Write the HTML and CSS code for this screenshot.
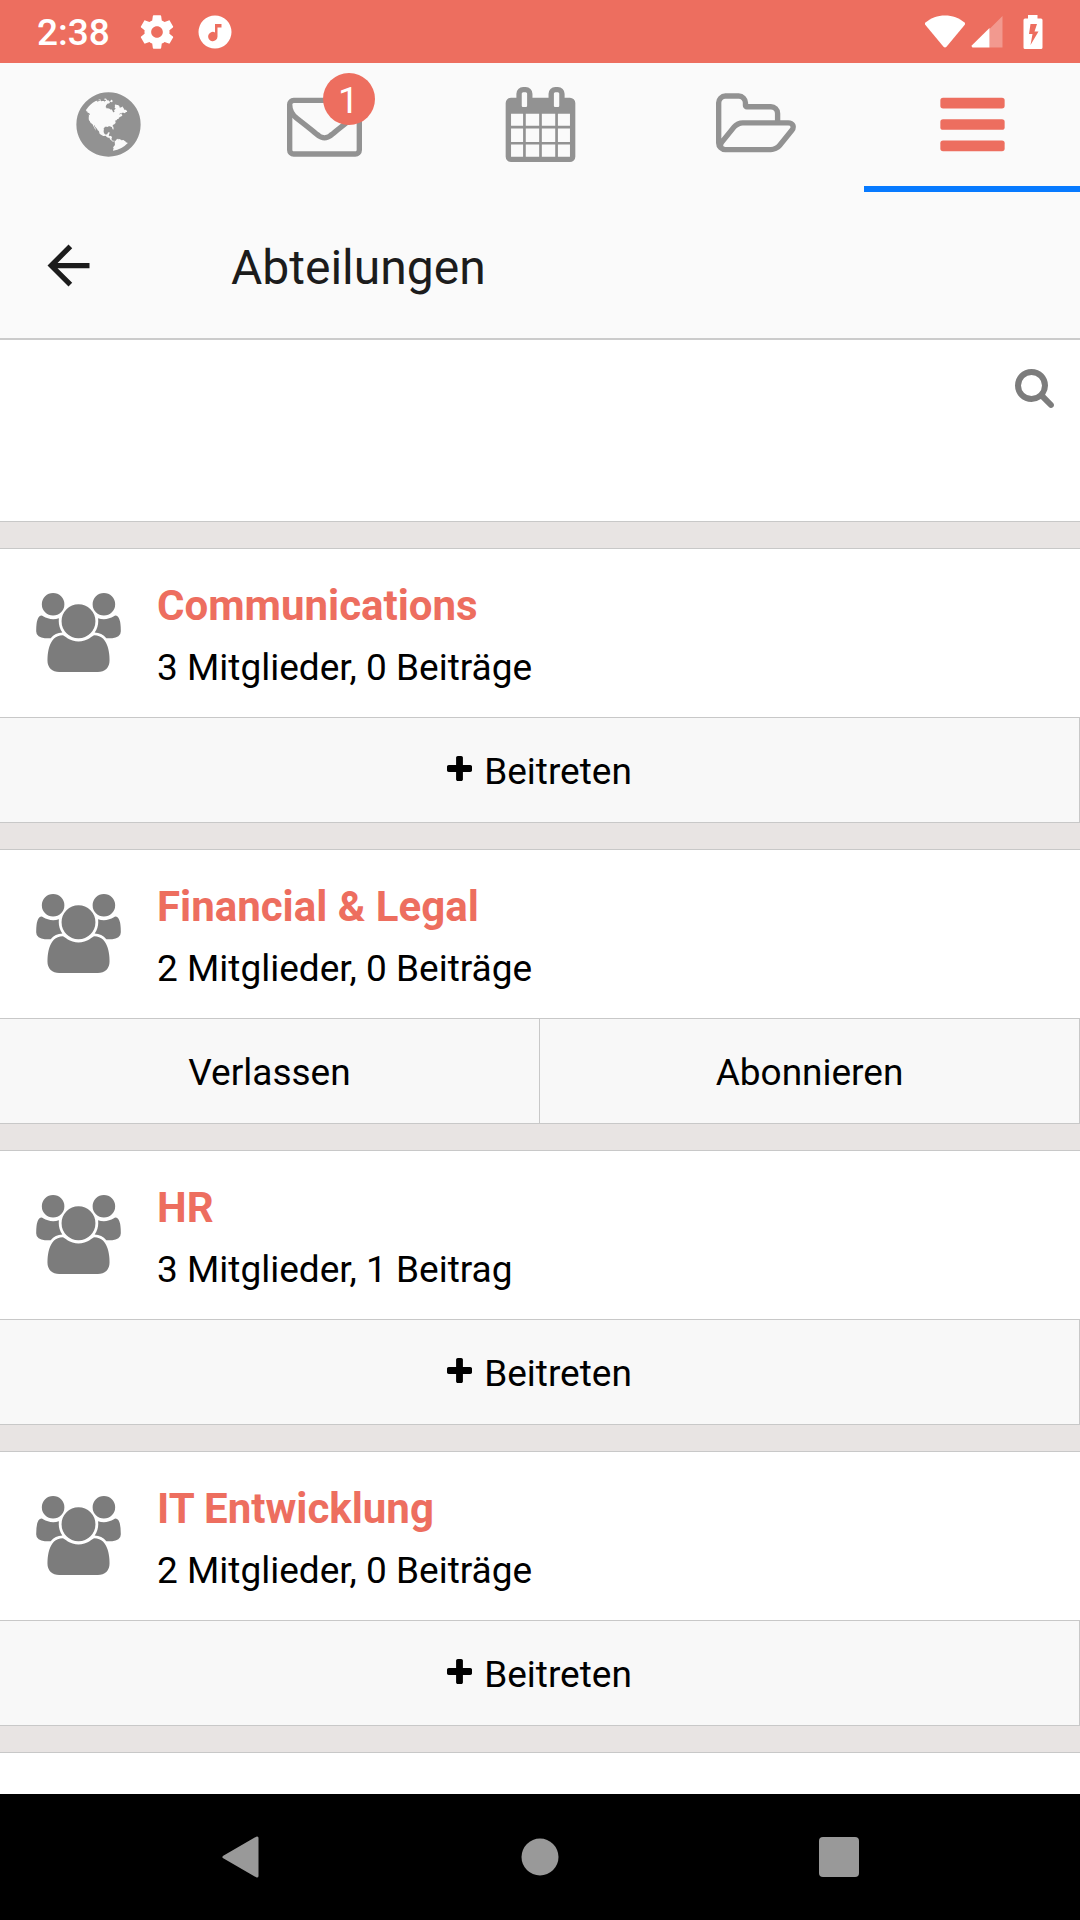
FILE: index.html
```html
<!DOCTYPE html>
<html lang="de">
<head>
<meta charset="utf-8">
<meta name="viewport" content="width=device-width, initial-scale=1">
<title>Abteilungen</title>
<link rel="stylesheet" href="styles.css">
</head>
<body>

<!-- Icons that are used more than once -->
<svg class="sprite" aria-hidden="true">
  <symbol id="icon-group" viewBox="0 0 1920 1792">
    <path d="M593 896q-162 5-265 128h-134q-82 0-138-40.5t-56-118.5q0-353 124-353 6 0 43.5 21t97.5 42.5 119 21.5q67 0 133-23-5 37-5 66 0 139 81 256zm1071 637q0 120-73 189.5t-194 69.5h-874q-121 0-194-69.5t-73-189.5q0-53 3.5-103.5t14-109 26.5-108.5 43-97.5 62-81 85.5-53.5 111.5-20q10 0 43 21.5t73 48 107 48 135 21.5 135-21.5 107-48 73-48 43-21.5q61 0 111.5 20t85.5 53.5 62 81 43 97.5 26.5 108.5 14 109 3.5 103.5zm-1024-1277q0 106-75 181t-181 75-181-75-75-181 75-181 181-75 181 75 75 181zm704 384q0 159-112.5 271.5t-271.5 112.5-271.5-112.5-112.5-271.5 112.5-271.5 271.5-112.5 271.5 112.5 112.5 271.5zm576 225q0 78-56 118.5t-138 40.5h-134q-103-123-265-128 81-117 81-256 0-29-5-66 66 23 133 23 59 0 119-21.5t97.5-42.5 43.5-21q124 0 124 353zm-128-609q0 106-75 181t-181 75-181-75-75-181 75-181 181-75 181 75 75 181z"/>
  </symbol>
  <symbol id="icon-plus" viewBox="192 128 1408 1408">
    <path d="M1600 736v192q0 40-28 68t-68 28h-416v416q0 40-28 68t-68 28h-192q-40 0-68-28t-28-68v-416h-416q-40 0-68-28t-28-68v-192q0-40 28-68t68-28h416v-416q0-40 28-68t68-28h192q40 0 68 28t28 68v416h416q40 0 68 28t28 68z"/>
  </symbol>
</svg>

<div class="status-bar">
  <span class="clock">2:38</span>
  <svg class="status-icon" viewBox="0 0 24 24"><path d="M19.43 12.98c.04-.32.07-.64.07-.98s-.03-.66-.07-.98l2.11-1.65c.19-.15.24-.42.12-.64l-2-3.46c-.12-.22-.39-.3-.61-.22l-2.49 1c-.52-.4-1.08-.73-1.69-.98l-.38-2.65C14.46 2.18 14.25 2 14 2h-4c-.25 0-.46.18-.49.42l-.38 2.65c-.61.25-1.17.59-1.69.98l-2.49-1c-.23-.09-.49 0-.61.22l-2 3.46c-.13.22-.07.49.12.64l2.11 1.65c-.04.32-.07.65-.07.98s.03.66.07.98l-2.11 1.65c-.19.15-.24.42-.12.64l2 3.46c.12.22.39.3.61.22l2.49-1c.52.4 1.08.73 1.69.98l.38 2.65c.03.24.24.42.49.42h4c.25 0 .46-.18.49-.42l.38-2.65c.61-.25 1.17-.59 1.69-.98l2.49 1c.23.09.49 0 .61-.22l2-3.46c.12-.22.07-.49-.12-.64l-2.11-1.65zM12 15.5c-1.93 0-3.5-1.57-3.5-3.5s1.57-3.5 3.5-3.5 3.5 1.57 3.5 3.5-1.57 3.5-3.5 3.5z"/></svg>
  <svg class="status-icon" viewBox="0 0 40 40"><path fill-rule="evenodd" d="M20 3.5a16.5 16.5 0 1 0 0 33a16.5 16.5 0 1 0 0-33zM20 12h6.500v3.500h-4V24.500a4.700 4.700 0 1 1-2.500-4.100z"/></svg>
  <div class="status-right">
    <svg class="wifi" viewBox="0 0 42 34"><path d="M1.500 7.500C7 3 13.500.5 21 .5s14 2.500 19.500 7q1 1 .3 2.200L22.500 31.800q-1.500 1.400-3 0L1.200 9.700q-.7-1.200.3-2.200z"/></svg>
    <svg class="signal" viewBox="0 0 32 34"><path opacity=".3" d="M31.500 1v31.500h-13V14z"/><path d="M18.500 13v19.500H1.500q-1.500-1-.5-2.200z"/></svg>
    <svg class="battery" viewBox="0 0 20 34"><path fill-rule="evenodd" d="M5 0h9.500v3.500H18q1.500 0 1.500 1.500v27.500q0 1.500-1.500 1.500H2q-1.500 0-1.500-1.500V5q0-1.500 1.500-1.500h3zM7.500 9L6 19h3.500L7.500 30l8-13.500h-4L14 9z"/></svg>
  </div>
</div>

<nav class="tabs">
  <a href="#news" class="tab" aria-label="Neuigkeiten">
    <svg class="tab-icon" viewBox="0 0 1792 1792"><path d="M896 128q209 0 385.500 103t279.500 279.500 103 385.500-103 385.500-279.500 279.500-385.500 103-385.500-103-279.500-279.500-103-385.500 103-385.500 279.500-279.500 385.500-103zm274 521q-2 1-9.500 9.500t-13.500 9.500q2 0 4.500-5t5-11 3.500-7q6-7 22-15 14-6 52-12 34-8 51 11-2-2 9.500-13t14.500-12q3-2 15-4.500t15-7.500l2-22q-12 1-17.500-7t-6.500-21q0 2-6 8 0-7-4.500-8t-11.500 1-9 1q-10-3-15-7.500t-8-16.500-4-15q-2-5-9.500-10.500t-9.500-10.500q-1-2-2.500-5.500t-3-6.500-4-5.500-5.500-2.500-7 5-7.500 10-4.500 5q-3-2-6-1.500t-4.500 1-4.500 3-5 3.500q-3 2-8.500 3t-8.500 2q15-5-1-11-10-4-16-3 9-4 7.500-12t-8.500-14h5q-1-4-8.500-8.500t-17.500-8.500-13-6q-8-5-34-9.500t-33-.5q-5 6-4.500 10.500t4 14 3.500 12.500q1 6-5.500 13t-6.500 12q0 7 14 15.500t10 21.500q-3 8-16 16t-16 12q-5 8-1.500 18.500t10.500 16.500q2 2 1.500 4t-3.500 4.500-5.500 4-6.500 3.500l-3 2q-11 5-20.500-6t-13.500-26q-7-25-16-30-23-8-29 1-5-13-41-26-25-9-58-4 6-1 0-15-7-15-19-12 3-6 4-17.500t1-13.500q3-13 12-23 1-1 7-8.500t9.500-13.500.5-6q35 4 50-11 5-5 11.500-17t10.500-17q9-6 14-5.500t14.500 5.500 14.500 5q14 1 15.500-11t-7.500-20q12 1 3-17-5-7-8-9-12-4-27 5-8 4 2 8-1-1-9.500 10.500t-16.500 17.500-16-5q-1-1-5.500-13.500t-9.500-13.500q-8 0-16 15 3-8-11-15t-24-8q19-12-8-27-7-4-20.500-5t-19.500 4q-5 7-5.500 11.500t5 8 10.500 5.500 11.500 4 8.500 3q14 10 8 14-2 1-8.500 3.500t-11.500 4.500-6 4q-3 4 0 14t-2 14q-5-5-9-17.500t-7-16.500q7 9-25 6l-10-1q-4 0-16 2t-20.500 1-13.500-8q-4-8 0-20 1-4 4-2-4-3-11-9.500t-10-8.500q-46 15-94 41 6 1 12-1 5-2 13-6.500t10-5.500q34-14 42-7l5-5q14 16 20 25-7-4-30-1-20 6-22 12 7 12 5 18-4-3-11.500-10t-14.500-11-15-5q-16 0-22 1-146 80-235 222 7 7 12 8 4 1 5 9t2.500 11 11.500-3q9 8 3 19 1-1 44 27 19 17 21 21 3 11-10 18-1-2-9-9t-9-4q-3 5 .5 18.500t10.500 12.500q-7 0-9.500 16t-2.500 35.500-1 23.500l2 1q-3 12 5.500 34.500t21.500 19.500q-13 3 20 43 6 8 8 9 3 2 12 7.500t15 10 10 10.500q4 5 10 22.500t14 23.500q-2 6 9.500 20t10.500 23q-1 0-2.500 1t-2.500 1q3 7 15.500 14t15.500 13q1 3 2 10t3 11 8 2q2-20-24-62-15-25-17-29-3-5-5.500-15.500t-4.500-14.500q2 0 6 1.500t8.500 3.500 7.500 4 2 3q-3 7 2 17.500t12 18.500 17 19 12 13q6 6 14 19.500t0 13.500q9 0 20 10.500t17 19.500q5 8 8 26t5 24q2 7 8.500 13.500t12.500 9.500l16 8 13 7q5 2 18.500 10.500t21.500 11.500q10 4 16 4t14.500-2.500 13.500-3.500q15-2 29 15t21 21q36 19 55 11-2 1 .5 7.500t8 15.500 9 14.500 5.500 8.500q5 6 18 15t18 15q6-4 7-9-3 8 7 20t18 10q14-3 14-32-31 15-49-18 0-1-2.500-5.500t-4-8.500-2.500-8.500 0-7.500 5-3q9 0 10-3.500t-2-12.500-4-13q-1-8-11-20t-12-15q-5 9-16 8t-16-9q0 1-1.500 5.500t-1.500 6.500q-13 0-15-1 1-3 2.500-17.500t3.500-22.500q1-4 5.500-12t7.500-14.500 4-12.500-4.500-9.500-17.500-2.500q-19 1-26 20-1 3-3 10.500t-5 11.500-9 7q-7 3-24 2t-24-5q-13-8-22.500-29t-9.500-37q0-10 2.500-26.500t3-25-5.500-24.500q3-2 9-9.500t10-10.500q2-1 4.500-1.500t4.500 0 4-1.500 3-6q-1-1-4-3-3-3-4-3 7 3 28.500-1.500t27.500 1.500q15 11 22-2 0-1-2.500-9.500t-.5-13.500q5 27 29 9 3 3 15.500 5t17.500 5q3 2 7 5.500t5.500 4.500 5-.5 8.500-6.500q10 14 12 24 11 40 19 44 7 3 11 2t4.500-9.500 0-14-1.500-12.500l-1-8v-18l-1-8q-15-3-18.500-12t1.500-18.500 15-18.500q1-1 8-3.500t15.500-6.500 12.500-8q21-19 15-35 7 0 11-9-1 0-5-3t-7.500-5-4.500-2q9-5 2-16 5-3 7.500-11t7.500-10q9 12 21 2 7-8 1-16 5-7 20.500-10.500t18.500-9.500q7 2 8-2t1-12 3-12q4-5 15-9t13-5l17-11q3-4 0-4 18 2 31-11 10-11-6-20 3-6-3-9.500t-15-5.500q3-1 11.500-.5t10.500-1.500q15-10-7-16-17-5-43 12zm-163 877q206-36 351-189-3-3-12.500-4.500t-12.500-3.500q-18-7-24-8 1-7-2.500-13t-8-9-12.500-8-11-7q-2-2-7-6t-7-5.500-7.500-4.500-8.500-2-10 1l-3 1q-3 1-5.500 2.500t-5.500 3-4 3 0 2.500q-21-17-36-22-5-1-11-5.500t-10.500-7-10-1.500-11.500 7q-5 5-6 15t-2 13q-7-5 0-17.500t2-18.500q-3-6-10.500-4.500t-12 4.500-11.500 8.500-9 6.500-8.500 5.500-8.500 7.500q-3 4-6 12t-5 11q-2-4-11.500-6.500t-9.500-5.500q2 10 4 35t5 38q7 31-12 48-27 25-29 40-4 22 12 26 0 7-8 20.500t-7 21.500q0 6 2 16z"/></svg>
  </a>
  <a href="#messages" class="tab" aria-label="Nachrichten">
    <span class="badge-holder">
      <svg class="tab-icon" viewBox="0 0 1792 1792"><path d="M1664 1504v-768q-32 36-69 66-268 206-426 338-51 43-83 67t-86.500 48.500-102.500 24.500h-2q-48 0-102.500-24.500t-86.500-48.500-83-67q-158-132-426-338-37-30-69-66v768q0 13 9.500 22.500t22.500 9.500h1472q13 0 22.500-9.500t9.500-22.500zm0-1051v-24.500l-.5-13-3-12.500-5.500-9-9-7.500-14-2.500h-1472q-13 0-22.500 9.500t-9.500 22.500q0 168 147 284 193 152 401 317 6 5 35 29.500t46 37.500 44.500 31.500 50.500 27.500 43 9h2q20 0 43-9t50.500-27.500 44.500-31.500 46-37.500 35-29.500q208-165 401-317 54-43 100.500-115.500t46.500-131.500zm128-37v1088q0 66-47 113t-113 47h-1472q-66 0-113-47t-47-113v-1088q0-66 47-113t113-47h1472q66 0 113 47t47 113z"/></svg>
      <span class="badge">1</span>
    </span>
  </a>
  <a href="#calendar" class="tab" aria-label="Kalender">
    <svg class="tab-icon" viewBox="0 0 1792 1792"><path d="M192 1664h288v-288h-288v288zm352 0h320v-288h-320v288zm-352-352h288v-320h-288v320zm352 0h320v-320h-320v320zm-352-384h288v-288h-288v288zm736 736h320v-288h-320v288zm-384-736h320v-288h-320v288zm768 736h288v-288h-288v288zm-384-352h320v-320h-320v320zm-352-864v-288q0-13-9.500-22.500t-22.500-9.500h-64q-13 0-22.500 9.500t-9.500 22.500v288q0 13 9.500 22.500t22.500 9.500h64q13 0 22.500-9.500t9.500-22.500zm736 864h288v-320h-288v320zm-384-384h320v-288h-320v288zm384 0h288v-288h-288v288zm32-480v-288q0-13-9.500-22.500t-22.500-9.500h-64q-13 0-22.500 9.500t-9.500 22.500v288q0 13 9.500 22.500t22.500 9.500h64q13 0 22.500-9.500t9.500-22.500zm384-64v1280q0 52-38 90t-90 38h-1408q-52 0-90-38t-38-90v-1280q0-52 38-90t90-38h128v-96q0-66 47-113t113-47h64q66 0 113 47t47 113v96h384v-96q0-66 47-113t113-47h64q66 0 113 47t47 113v96h128q52 0 90 38t38 90z"/></svg>
  </a>
  <a href="#files" class="tab" aria-label="Dateien">
    <svg class="tab-icon" viewBox="0 128 1920 1792"><path d="M1781 1083q0-35-53-35h-1088q-40 0-85.500 21.500t-71.500 52.500l-294 363q-18 24-18 40 0 35 53 35h1088q40 0 86-22t71-53l294-363q18-22 18-39zm-1141-163h768v-160q0-40-28-68t-68-28h-576q-40 0-68-28t-28-68v-64q0-40-28-68t-68-28h-320q-40 0-68 28t-28 68v853l256-315q44-53 116-87.500t140-34.500zm1269 163q0 62-46 120l-295 363q-43 53-116 87.500t-140 34.500h-1088q-92 0-158-66t-66-158v-960q0-92 66-158t158-66h320q92 0 158 66t66 158v32h544q92 0 158 66t66 158v160h192q54 0 99 24.500t67 70.500q15 32 15 68z"/></svg>
  </a>
  <a href="#menu" class="tab active" aria-label="Menü">
    <svg class="tab-icon" viewBox="0 0 1792 1792"><rect x="128" y="256" width="1536" height="256" rx="64"/><rect x="128" y="768" width="1536" height="256" rx="64"/><rect x="128" y="1280" width="1536" height="256" rx="64"/></svg>
  </a>
</nav>

<header class="page-header">
  <button type="button" class="back" aria-label="Zurück">
    <svg viewBox="0 0 24 24"><path d="M20 11H7.830l5.590-5.590L12 4l-8 8 8 8 1.410-1.410L7.830 13H20v-2z"/></svg>
  </button>
  <h1>Abteilungen</h1>
</header>

<main class="content">
  <form class="search">
    <input type="search" aria-label="Abteilungen suchen">
    <button type="submit" aria-label="Suchen">
      <svg viewBox="64 128 1664 1664"><path d="M1216 832q0-185-131.500-316.500t-316.500-131.500-316.500 131.500-131.500 316.500 131.500 316.500 316.500 131.500 316.500-131.500 131.500-316.500zm512 832q0 52-38 90t-90 38q-54 0-90-38l-343-342q-179 124-399 124-143 0-273.500-55.500t-225-150-150-225-55.500-273.500 55.500-273.500 150-225 225-150 273.500-55.500 273.500 55.500 225 150 150 225 55.500 273.500q0 220-124 399l343 343q37 37 37 90z"/></svg>
    </button>
  </form>

  <section class="card">
    <div class="info">
      <svg class="group-icon"><use href="#icon-group"/></svg>
      <div>
        <h2>Communications</h2>
        <p>3 Mitglieder, 0 Beiträge</p>
      </div>
    </div>
    <div class="actions">
      <button type="button"><svg><use href="#icon-plus"/></svg>Beitreten</button>
    </div>
  </section>

  <section class="card">
    <div class="info">
      <svg class="group-icon"><use href="#icon-group"/></svg>
      <div>
        <h2>Financial &amp; Legal</h2>
        <p>2 Mitglieder, 0 Beiträge</p>
      </div>
    </div>
    <div class="actions">
      <button type="button">Verlassen</button>
      <button type="button">Abonnieren</button>
    </div>
  </section>

  <section class="card">
    <div class="info">
      <svg class="group-icon"><use href="#icon-group"/></svg>
      <div>
        <h2>HR</h2>
        <p>3 Mitglieder, 1 Beitrag</p>
      </div>
    </div>
    <div class="actions">
      <button type="button"><svg><use href="#icon-plus"/></svg>Beitreten</button>
    </div>
  </section>

  <section class="card">
    <div class="info">
      <svg class="group-icon"><use href="#icon-group"/></svg>
      <div>
        <h2>IT Entwicklung</h2>
        <p>2 Mitglieder, 0 Beiträge</p>
      </div>
    </div>
    <div class="actions">
      <button type="button"><svg><use href="#icon-plus"/></svg>Beitreten</button>
    </div>
  </section>

  <section class="card">
    <div class="info">
      <svg class="group-icon"><use href="#icon-group"/></svg>
    </div>
  </section>
</main>

<div class="system-nav">
  <button type="button" aria-label="Zurück"><svg viewBox="0 0 42 42"><path d="M37 2v38L4 21z" stroke="#999" stroke-width="3" stroke-linejoin="round"/></svg></button>
  <button type="button" aria-label="Startseite"><svg viewBox="0 0 42 42"><circle cx="21" cy="21" r="18.500"/></svg></button>
  <button type="button" aria-label="Übersicht"><svg viewBox="0 0 42 42"><rect x="1" y="1" width="40" height="40" rx="4"/></svg></button>
</div>

</body>
</html>
```
FILE: styles.css
```css
* {
  box-sizing: border-box;
}

body {
  margin: 0;
  height: 100vh;
  display: flex;
  flex-direction: column;
  font-family: Roboto, sans-serif;
  font-size: 37px;
  color: #000;
  background: #e8e4e3;
}

h1, h2, p {
  margin: 0;
}

svg {
  display: block;
  flex: none;
  fill: currentColor;
}

button {
  margin: 0;
  padding: 0;
  border: none;
  background: none;
  font: inherit;
  color: inherit;
  cursor: pointer;
}

.sprite {
  position: absolute;
  width: 0;
  height: 0;
}

/* Status bar */
.status-bar {
  flex: none;
  display: flex;
  align-items: center;
  height: 63px;
  padding: 0 37px;
  color: #fff;
  background: #ed6e5f;
}

.clock {
  margin-right: 27px;
  padding-top: 2px;
  font-weight: 500;
  line-height: 44px;
}

.status-icon {
  width: 40px;
  height: 40px;
  margin-right: 18px;
}

.status-right {
  display: flex;
  margin-left: auto;
}

.wifi {
  width: 42px;
  height: 34px;
}

.signal {
  width: 32px;
  height: 34px;
  margin: 0 20px 0 5px;
}

.battery {
  width: 20px;
  height: 34px;
}

/* Tabs */
.tabs {
  flex: none;
  display: grid;
  grid-template-columns: repeat(5, 1fr);
  background: #fafafa;
}

.tab {
  display: flex;
  justify-content: center;
  padding: 24px 0;
  border-bottom: 6px solid transparent;
  color: #929292;
}

.tab.active {
  color: #ed6e5f;
  border-bottom-color: #077aff;
}

.tab-icon {
  height: 75px;
}

.badge-holder {
  position: relative;
}

.badge {
  position: absolute;
  top: -14px;
  right: -13px;
  width: 52px;
  height: 52px;
  border-radius: 50%;
  line-height: 56px;
  text-align: center;
  color: #fff;
  background: #ed6e5f;
}

/* Header */
.page-header {
  flex: none;
  display: flex;
  align-items: center;
  gap: 131px;
  height: 148px;
  padding: 0 37px;
  border-bottom: 2px solid #cbcbcb;
  color: #1c1c1c;
  background: #fafafa;
}

.back svg {
  width: 63px;
  height: 63px;
}

.page-header h1 {
  padding-top: 6px;
  font-size: 48px;
  font-weight: 400;
  line-height: 60px;
}

/* List */
.content {
  flex: 1;
  min-height: 0;
  display: flex;
  flex-direction: column;
  gap: 26px;
  overflow: hidden;
}

.search {
  flex: none;
  display: flex;
  align-items: flex-start;
  height: 182px;
  padding: 29px 26px;
  border-bottom: 1px solid #c8c8c8;
  background: #fff;
}

.search input {
  flex: 1;
  min-width: 0;
  border: none;
  outline: none;
  font: inherit;
}

.search svg {
  width: 39px;
  height: 39px;
  color: #7c7c7c;
}

.card {
  flex: none;
  border: solid #c8c8c8;
  border-width: 1px 0;
  background: #fff;
}

.info {
  display: flex;
  gap: 36px;
  padding: 32px 36px 24px;
}

.group-icon {
  width: 85px;
  height: 79px;
  margin-top: 12px;
  color: #7c7c7c;
}

.info h2 {
  font-size: 42px;
  font-weight: 700;
  line-height: 50px;
  color: #ed6e5f;
}

.info p {
  margin-top: 12px;
  line-height: 50px;
}

.actions {
  display: flex;
  border-top: 1px solid #c8c8c8;
  background: #f8f8f8;
}

.actions button {
  flex: 1;
  display: flex;
  align-items: center;
  justify-content: center;
  gap: 12px;
  height: 104px;
  padding-top: 3px;
  border-right: 1px solid #c8c8c8;
}

.actions svg {
  width: 25px;
  height: 25px;
  margin-bottom: 6px;
}

/* Android buttons at the bottom */
.system-nav {
  flex: none;
  display: grid;
  grid-template-columns: repeat(3, 1fr);
  height: 126px;
  padding: 0 91px;
  color: #999;
  background: #000;
}

.system-nav button {
  display: flex;
  align-items: center;
  justify-content: center;
}

.system-nav svg {
  width: 42px;
  height: 42px;
}
```
